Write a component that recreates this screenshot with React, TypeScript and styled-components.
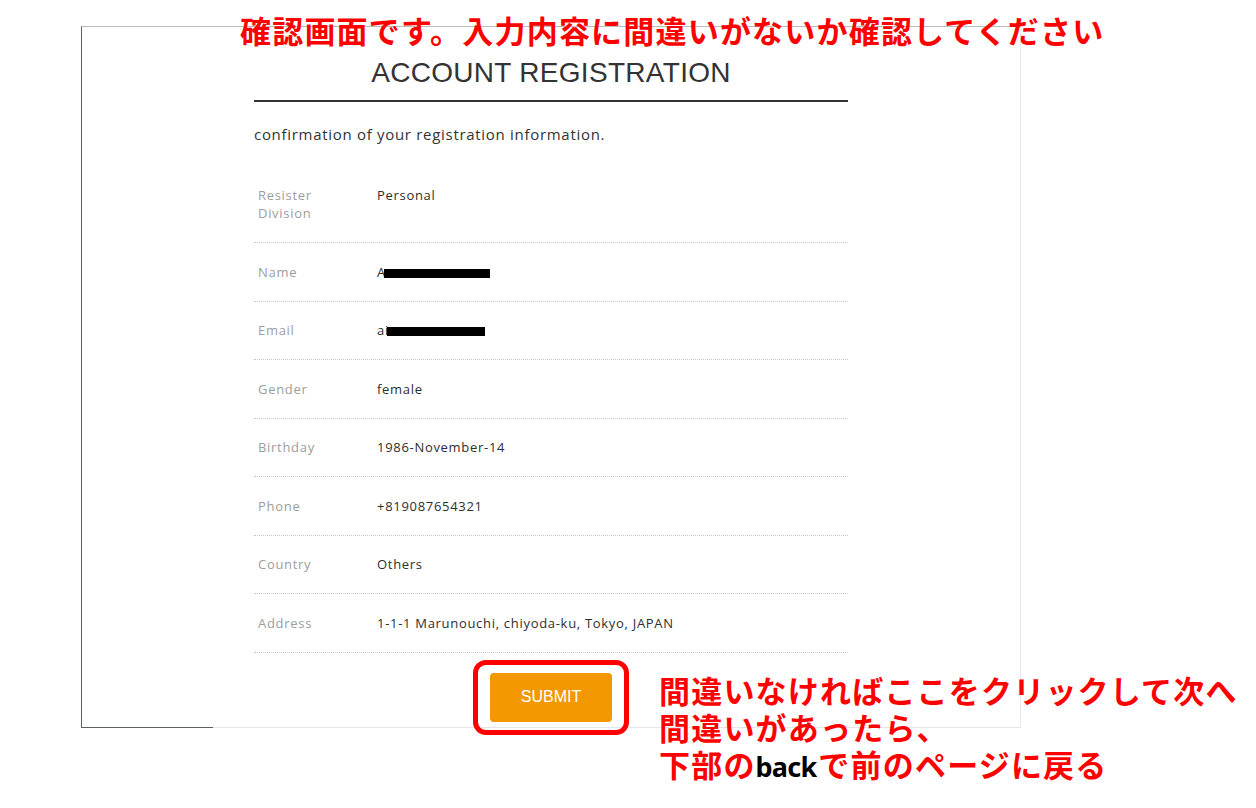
import { createGlobalStyle, styled } from "styled-components";

const GlobalStyle = createGlobalStyle`
  html, body {
    margin: 0;
    padding: 0;
    background: #fff;
  }
  body {
    font-family: "Open Sans", "Noto Sans", sans-serif;
  }
`;

const Page = styled.div`
  position: relative;
  width: 1256px;
  height: 808px;
  overflow: hidden;
  background: #fff;
`;

const Frame = styled.div`
  position: relative;
  box-sizing: border-box;
  margin: 26px 0 0 81px;
  width: 940px;
  height: 702px;
  border-top: 1px solid #bcbcbc;
  border-left: 1px solid #5a5f66;
  border-right: 1px solid #e8e8e8;
  border-bottom: 1px solid #e6e6e6;
  padding-top: 28.5px;

  &::after {
    content: "";
    position: absolute;
    left: -1px;
    bottom: -1px;
    width: 132px;
    height: 1px;
    background: #5a5f66;
  }
`;

const Column = styled.div`
  width: 594px;
  margin: 0 auto;
`;

const Title = styled.h1`
  margin: 0;
  padding-bottom: 11px;
  border-bottom: 2px solid #333;
  font-family: "Liberation Sans", Arial, sans-serif;
  font-weight: 400;
  font-size: 28px;
  line-height: 33.6px;
  letter-spacing: 0.3px;
  color: #333;
  text-align: center;
`;

const Lead = styled.p`
  margin: 22px 0 22.5px;
  font-size: 15px;
  line-height: 20px;
  letter-spacing: 0.7px;
  color: #333;
`;

const Row = styled.div`
  display: grid;
  grid-template-columns: 123px 1fr;
  padding: 19.75px 0;
  border-bottom: 1px dotted #c8c8c8;
  font-size: 13px;
  line-height: 18px;
  letter-spacing: 0.7px;
`;

const Label = styled.div`
  padding: 0 20px 0 4px;
  color: #9d9d9d;
`;

const Value = styled.div`
  color: #2e2e2e;
  white-space: nowrap;
`;

const Redacted = styled.span`
  display: inline-block;
  width: ${(p: { $w: number }) => p.$w}px;
  height: 9px;
  margin-left: -2px;
  background: #000;
  vertical-align: -1px;
`;

const Actions = styled.div`
  display: flex;
  justify-content: center;
  margin-top: 7px;
`;

const Highlight = styled.div`
  box-sizing: border-box;
  width: 156px;
  padding: 8px 12px;
  border: 5px solid #ff0000;
  border-radius: 13px;
`;

const SubmitButton = styled.button`
  display: block;
  width: 122px;
  height: 49px;
  border: none;
  border-radius: 4px;
  background: #f39800;
  color: #fff;
  font-family: "Liberation Sans", Arial, sans-serif;
  font-size: 16px;
  cursor: pointer;
`;

const Note = styled.div`
  position: absolute;
  left: ${(p: { $x: number; $y: number }) => p.$x}px;
  top: ${(p) => p.$y}px;
  font-family: "Noto Sans CJK JP", "Noto Sans", sans-serif;
  font-weight: 700;
  font-size: 31px;
  line-height: 37px;
  letter-spacing: 1.2px;
  color: #ff0000;
  white-space: nowrap;
`;

const Black = styled.span`
  font-family: "Noto Sans", "Open Sans", sans-serif;
  font-size: 27px;
  letter-spacing: -0.8px;
  margin-right: 2px;
  color: #000;
`;

const rows: { label: string; value: string; redact?: number }[] = [
  { label: "Resister Division", value: "Personal" },
  { label: "Name", value: "A", redact: 106 },
  { label: "Email", value: "ai", redact: 98 },
  { label: "Gender", value: "female" },
  { label: "Birthday", value: "1986-November-14" },
  { label: "Phone", value: "+819087654321" },
  { label: "Country", value: "Others" },
  { label: "Address", value: "1-1-1 Marunouchi, chiyoda-ku, Tokyo, JAPAN" },
];

export default function App() {
  return (
    <Page>
      <GlobalStyle />
      <Frame>
        <Column>
          <Title>ACCOUNT REGISTRATION</Title>
          <Lead>confirmation of your registration information.</Lead>
          {rows.map((r) => (
            <Row key={r.label}>
              <Label>{r.label}</Label>
              <Value>
                {r.value}
                {r.redact && <Redacted $w={r.redact} />}
              </Value>
            </Row>
          ))}
          <Actions>
            <Highlight>
              <SubmitButton>SUBMIT</SubmitButton>
            </Highlight>
          </Actions>
        </Column>
      </Frame>

      <Note $x={240} $y={11}>
        確認画面です。入力内容に間違いがないか確認してください
      </Note>
      <Note $x={659} $y={671}>
        間違いなければここをクリックして次へ
        <br />
        間違いがあったら、
        <br />
        下部の<Black>back</Black>で前のページに戻る
      </Note>
    </Page>
  );
}
